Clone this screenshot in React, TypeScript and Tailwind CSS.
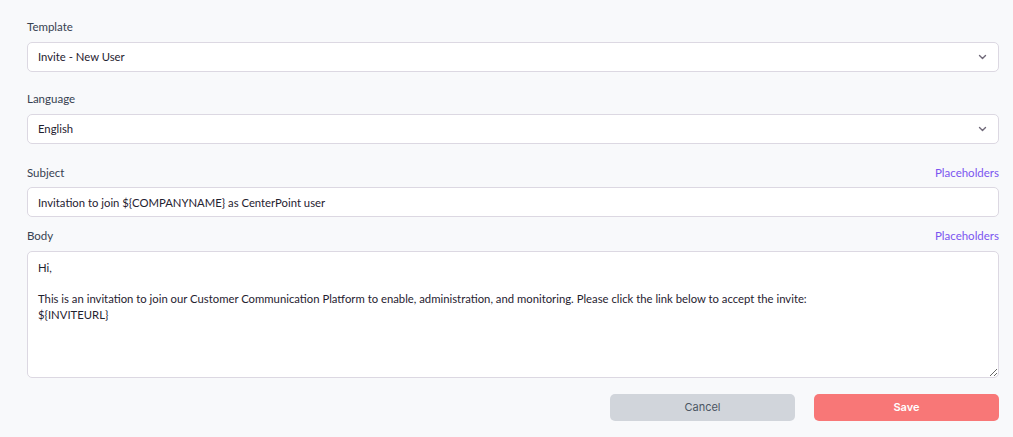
import React, { useState } from 'react';

const labelCls = "text-[11.5px] leading-4 text-[#374151] font-['Lato',sans-serif]";
const boxCls =
  'w-full bg-white border border-[#dcd8e2] rounded-[5px] text-[11.3px] text-[#1f2230] font-[\'Lato\',sans-serif] outline-none';
const linkCls = "text-[11.5px] leading-4 text-[#7b55f0] font-['Lato',sans-serif] cursor-pointer";

function Chevron() {
  return (
    <svg width="9" height="6" viewBox="0 0 9 6" className="absolute right-[12px] top-1/2 -translate-y-1/2 pointer-events-none">
      <path d="M1.5 1.5l3 3 3-3" fill="none" stroke="#6f6878" strokeWidth="1.4" strokeLinecap="round" strokeLinejoin="round" />
    </svg>
  );
}

function SelectField({ label, value }: { label: string; value: string }) {
  return (
    <div>
      <div className={labelCls}>{label}</div>
      <div className="relative mt-[7px]">
        <div className={`${boxCls} h-[30px] flex items-center pl-[10px]`}>{value}</div>
        <Chevron />
      </div>
    </div>
  );
}

export default function App() {
  const [subject, setSubject] = useState('Invitation to join ${COMPANYNAME} as CenterPoint user');
  const [body, setBody] = useState(
    'Hi,\n\nThis is an invitation to join our Customer Communication Platform to enable, administration, and monitoring. Please click the link below to accept the invite:\n${INVITEURL}'
  );

  return (
    <div className="min-h-screen bg-[#f8f9fb] pl-[27px] pr-[14px] pt-[19px]">
      <SelectField label="Template" value="Invite - New User" />

      <div className="mt-[19px]">
        <SelectField label="Language" value="English" />
      </div>

      {/* Subject */}
      <div className="mt-[21px]">
        <div className="flex justify-between items-center">
          <span className={labelCls}>Subject</span>
          <span className={linkCls}>Placeholders</span>
        </div>
        <input
          className={`${boxCls} h-[30px] px-[10px] mt-[6px] block`}
          value={subject}
          onChange={(e) => setSubject(e.target.value)}
        />
      </div>

      {/* Body */}
      <div className="mt-[11px]">
        <div className="flex justify-between items-center">
          <span className={labelCls}>Body</span>
          <span className={linkCls}>Placeholders</span>
        </div>
        <textarea
          className={`${boxCls} h-[127px] px-[10px] pt-[8px] mt-[7px] block leading-[15.5px] resize-y`}
          value={body}
          onChange={(e) => setBody(e.target.value)}
        />
      </div>

      <div className="flex justify-end gap-[19px] mt-[16px]">
        <button className="w-[185px] h-[27px] rounded-[5px] bg-[#d1d5db] text-[#4b5563] text-[11px] font-['Inter',sans-serif]">
          Cancel
        </button>
        <button className="w-[185px] h-[27px] rounded-[5px] bg-[#f87777] text-white text-[11px] font-semibold font-['Inter',sans-serif]">
          Save
        </button>
      </div>
    </div>
  );
}
